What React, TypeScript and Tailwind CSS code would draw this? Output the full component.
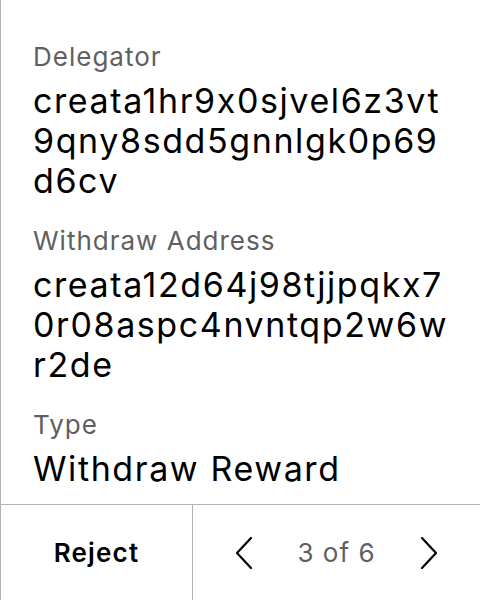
import React from "react";

const font = { fontFamily: "Inter, 'Noto Sans', sans-serif" };

function Field({ label, lines, className = "" }: { label: string; lines: string[]; className?: string }) {
  return (
    <div className={"flex flex-col " + className}>
      <div className="text-[26px] leading-[32px] tracking-[1px] text-[#5f5f5f]">{label}</div>
      <div className="mt-[8px] flex flex-col text-[34px] leading-[40px] tracking-[1.6px] text-black">
        {lines.map((l) => (
          <span key={l} className="whitespace-nowrap">{l}</span>
        ))}
      </div>
    </div>
  );
}

export default function App() {
  return (
    <div
      style={font}
      className="w-[480px] h-[600px] flex flex-col bg-white border-l border-[#b3b3b3] [font-feature-settings:'calt'_0]"
    >
      <div className="flex-1 flex flex-col pl-[32px] pr-[30px] pt-[41px]">
        <Field label="Delegator" lines={["creata1hr9x0sjvel6z3vt", "9qny8sdd5gnnlgk0p69", "d6cv"]} />
        <Field
          className="mt-[24px]"
          label="Withdraw Address"
          lines={["creata12d64j98tjjpqkx7", "0r08aspc4nvntqp2w6w", "r2de"]}
        />
        <Field className="mt-[24px]" label="Type" lines={["Withdraw Reward"]} />
      </div>
      <div className="h-[96px] flex border-t border-[#b3b3b3]">
        <div className="w-[192px] flex items-center justify-center border-r border-[#b3b3b3]">
          <span className="text-[26px] font-semibold tracking-[1.2px] text-black">Reject</span>
        </div>
        <div className="flex-1 flex items-center justify-between px-[40px]">
          <svg width="22" height="34" viewBox="0 0 22 34" fill="none" stroke="black" strokeWidth="2.2" strokeLinecap="round" strokeLinejoin="round">
            <path d="M18 2 L4 17 L18 32" />
          </svg>
          <span className="text-[26px] tracking-[1px] text-[#5f5f5f]">3 of 6</span>
          <svg width="22" height="34" viewBox="0 0 22 34" fill="none" stroke="black" strokeWidth="2.2" strokeLinecap="round" strokeLinejoin="round">
            <path d="M4 2 L18 17 L4 32" />
          </svg>
        </div>
      </div>
    </div>
  );
}
